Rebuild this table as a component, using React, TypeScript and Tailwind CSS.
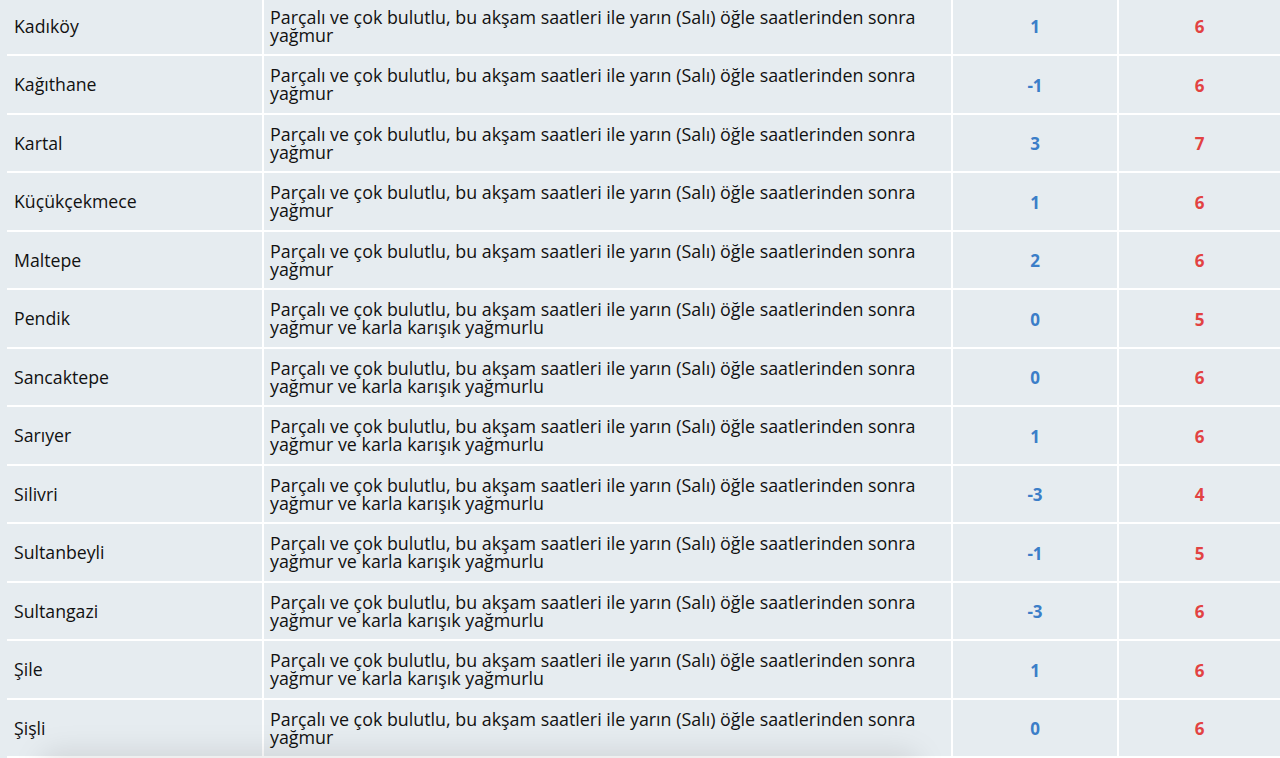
const A = 'Parçalı ve çok bulutlu, bu akşam saatleri ile yarın (Salı) öğle saatlerinden sonra yağmur'
const B = 'Parçalı ve çok bulutlu, bu akşam saatleri ile yarın (Salı) öğle saatlerinden sonra yağmur ve karla karışık yağmurlu'

const rows = [
  { name: 'Kadıköy', desc: A, min: '1', max: '6' },
  { name: 'Kağıthane', desc: A, min: '-1', max: '6' },
  { name: 'Kartal', desc: A, min: '3', max: '7' },
  { name: 'Küçükçekmece', desc: A, min: '1', max: '6' },
  { name: 'Maltepe', desc: A, min: '2', max: '6' },
  { name: 'Pendik', desc: B, min: '0', max: '5' },
  { name: 'Sancaktepe', desc: B, min: '0', max: '6' },
  { name: 'Sarıyer', desc: B, min: '1', max: '6' },
  { name: 'Silivri', desc: B, min: '-3', max: '4' },
  { name: 'Sultanbeyli', desc: B, min: '-1', max: '5' },
  { name: 'Sultangazi', desc: B, min: '-3', max: '6' },
  { name: 'Şile', desc: B, min: '1', max: '6' },
  { name: 'Şişli', desc: A, min: '0', max: '6' },
]

export default function App() {
  return (
    <div
      className="relative h-[758px] overflow-hidden bg-[#e6ecf0] text-[#111]"
      style={{ fontFamily: '"Open Sans", "Noto Sans", sans-serif' }}
    >
      <div className="-mt-[2.5px] ml-[7px]">
        {rows.map((r) => (
          <div
            key={r.name}
            className="grid h-[58.5px] grid-cols-[255px_689px_166px_1fr] border-b-2 border-white"
          >
            <div className="flex items-center pl-[7px] text-[17.7px] leading-[18px]">
              {r.name}
            </div>
            <div className="flex items-center border-l-2 border-white pl-[6px] pr-[16px] text-[17.85px] leading-[18px]">
              <span>{r.desc}</span>
            </div>
            <div className="flex items-center justify-center border-l-2 border-white pt-[2px] text-[17px] font-bold text-[#3b7ec8]">
              {r.min}
            </div>
            <div className="flex items-center justify-center border-l-2 border-white pt-[2px] text-[17px] font-bold text-[#e24242]">
              {r.max}
            </div>
          </div>
        ))}
      </div>
      <div className="pointer-events-none absolute bottom-[-30px] left-[40px] h-[36px] w-[880px] rounded-full bg-black/10 blur-[14px]" />
    </div>
  )
}
